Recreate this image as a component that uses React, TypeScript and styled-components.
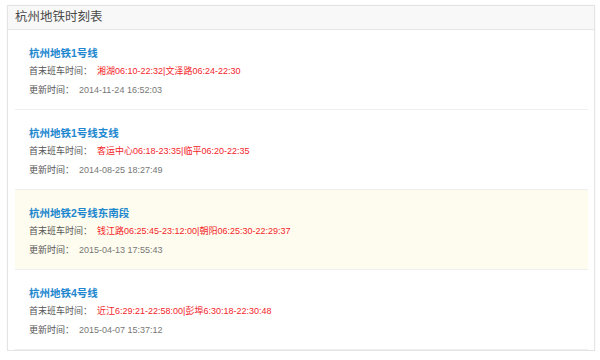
import React from "react";
import styled, { createGlobalStyle } from "styled-components";

const Global = createGlobalStyle`
  html, body { margin: 0; padding: 0; background: #ffffff; }
  body { font-family: "Liberation Sans", Arial, "Noto Sans CJK SC", sans-serif; }
`;

const Page = styled.div`
  padding: 5px 5px 0 7px;
  width: 600px;
  box-sizing: border-box;
`;

const Panel = styled.div`
  border: 1px solid #e4e4e4;
  background: #ffffff;
  box-shadow: 0 0 2px rgba(0, 0, 0, 0.05);
`;

const PanelHeader = styled.div`
  height: 23px;
  line-height: 23px;
  padding-left: 7px;
  background: #f8f8f8;
  border-bottom: 1px solid #e6e6e6;
  font-size: 12.5px;
  color: #4a4a4a;
`;

const List = styled.div`
  padding: 0 6px 0 7px;
`;

const Item = styled.div<{ $highlight?: boolean }>`
  padding: 14px 14px 9px;
  border-bottom: 1px solid #efefef;
  background: ${(p) => (p.$highlight ? "#fefcee" : "#ffffff")};
`;

const Title = styled.div`
  font-size: 10.5px;
  font-weight: bold;
  color: #1d88cf;
  line-height: 18px;
`;

const Line = styled.div`
  font-size: 9px;
  line-height: 19px;
  color: #555;
`;

const Label = styled.span`
  color: #555;
  margin-right: 5px;
`;

const Hours = styled.span`
  color: #f2252a;
`;

const Updated = styled.span`
  color: #777;
`;

const lines = [
  {
    name: "杭州地铁1号线",
    hours: "湘湖06:10-22:32|文泽路06:24-22:30",
    updated: "2014-11-24 16:52:03",
  },
  {
    name: "杭州地铁1号线支线",
    hours: "客运中心06:18-23:35|临平06:20-22:35",
    updated: "2014-08-25 18:27:49",
  },
  {
    name: "杭州地铁2号线东南段",
    hours: "钱江路06:25:45-23:12:00|朝阳06:25:30-22:29:37",
    updated: "2015-04-13 17:55:43",
    highlight: true,
  },
  {
    name: "杭州地铁4号线",
    hours: "近江6:29:21-22:58:00|彭埠6:30:18-22:30:48",
    updated: "2015-04-07 15:37:12",
  },
];

export default function App() {
  return (
    <>
      <Global />
      <Page>
        <Panel>
          <PanelHeader>杭州地铁时刻表</PanelHeader>
          <List>
            {lines.map((l) => (
              <Item key={l.name} $highlight={l.highlight}>
                <Title>{l.name}</Title>
                <Line>
                  <Label>首末班车时间：</Label>
                  <Hours>{l.hours}</Hours>
                </Line>
                <Line>
                  <Label>更新时间：</Label>
                  <Updated>{l.updated}</Updated>
                </Line>
              </Item>
            ))}
          </List>
        </Panel>
      </Page>
    </>
  );
}
